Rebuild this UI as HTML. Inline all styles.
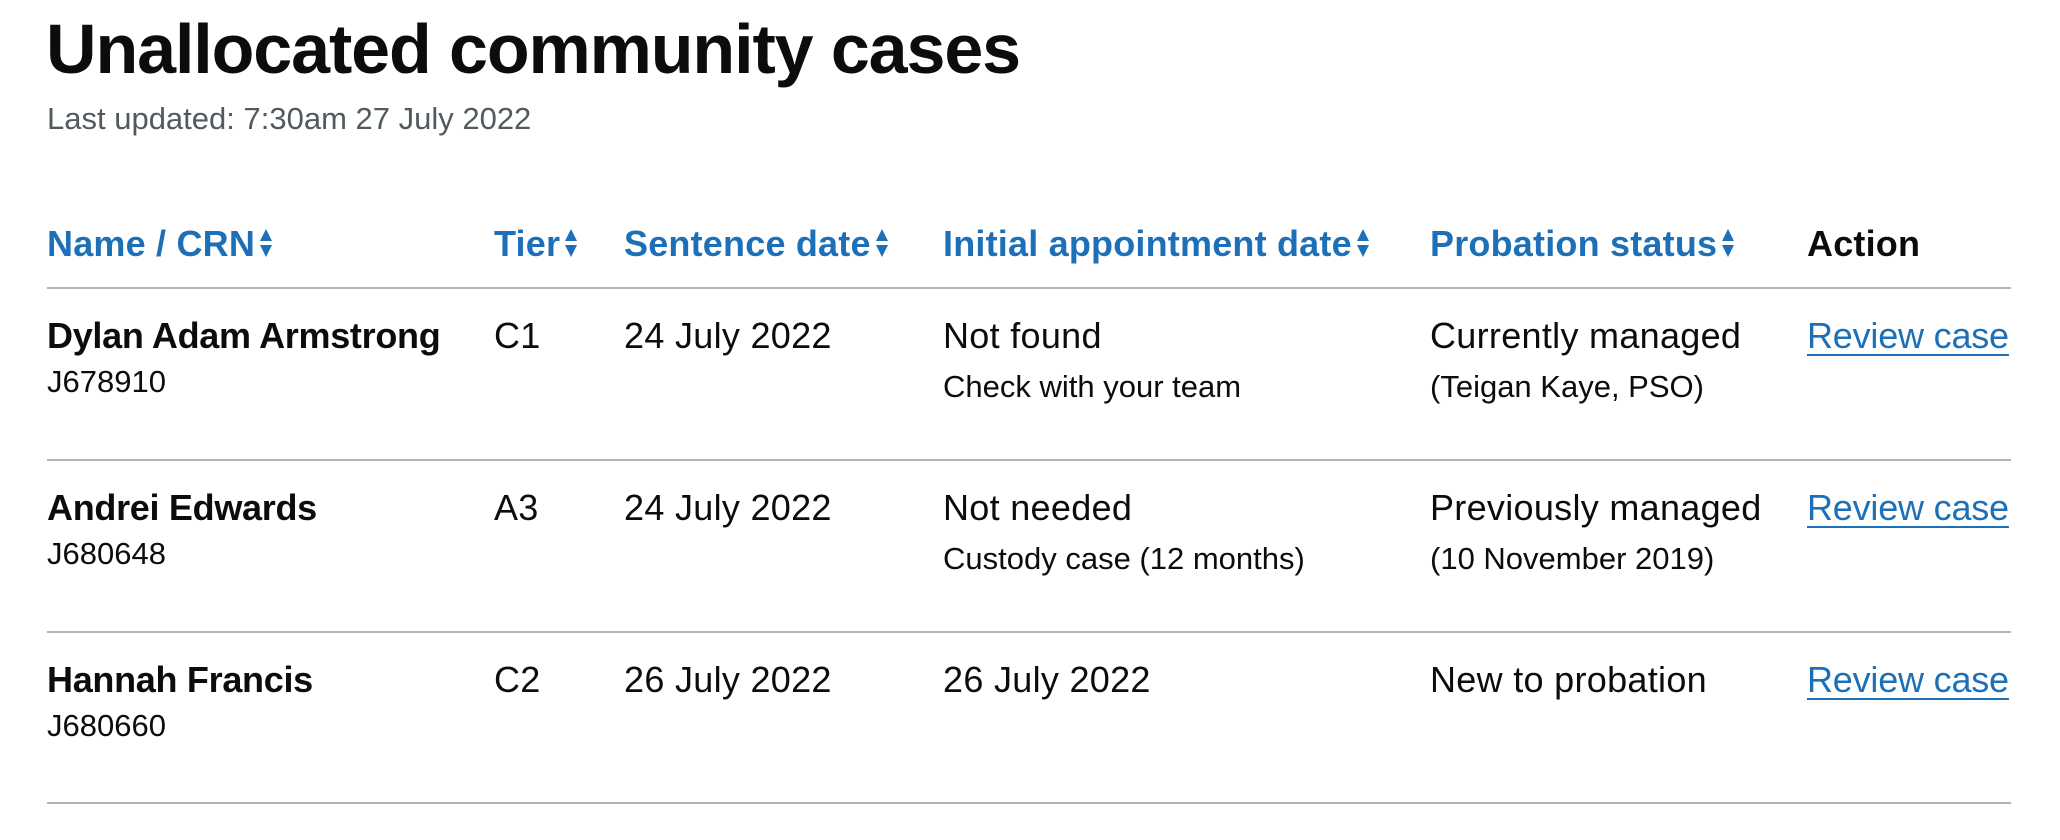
<!DOCTYPE html>
<html><head><meta charset="utf-8"><style>
body{margin:0;width:2060px;height:840px;background:#fff;font-family:"Liberation Sans",Arial,sans-serif;color:#0b0c0c;position:relative;overflow:hidden}
.a{position:absolute;white-space:nowrap;line-height:normal}
h1{position:absolute;left:46px;top:9px;margin:0;font-size:70px;font-weight:bold;letter-spacing:-1.1px;line-height:normal}
.h{font-size:36px;font-weight:bold;color:#1d70b8;top:223px;letter-spacing:0.2px}
.h svg{display:inline-block;vertical-align:-2px;margin-left:4px}
.m{font-size:36px;letter-spacing:0.3px}
.b{font-weight:bold;letter-spacing:-0.3px}
.s{font-size:31px}
.l{color:#1d70b8;text-decoration:underline;text-decoration-thickness:2px;text-underline-offset:6px;letter-spacing:-0.2px}
.line{position:absolute;left:47px;width:1964px;height:2px;background:#b1b4b6}
</style></head><body>
<h1>Unallocated community cases</h1>
<div class="a" style="left:47px;top:101px;font-size:31px;color:#505a5f">Last updated: 7:30am 27 July 2022</div>

<div class="a h" style="left:47px">Name / CRN<svg width="14" height="30" viewBox="0 0 14 30"><path d="M7 1L13 13H1Z M7 29L13 17H1Z" fill="#1d70b8"/></svg></div>
<div class="a h" style="left:494px">Tier<svg width="14" height="30" viewBox="0 0 14 30"><path d="M7 1L13 13H1Z M7 29L13 17H1Z" fill="#1d70b8"/></svg></div>
<div class="a h" style="left:624px">Sentence date<svg width="14" height="30" viewBox="0 0 14 30"><path d="M7 1L13 13H1Z M7 29L13 17H1Z" fill="#1d70b8"/></svg></div>
<div class="a h" style="left:943px">Initial appointment date<svg width="14" height="30" viewBox="0 0 14 30"><path d="M7 1L13 13H1Z M7 29L13 17H1Z" fill="#1d70b8"/></svg></div>
<div class="a h" style="left:1430px">Probation status<svg width="14" height="30" viewBox="0 0 14 30"><path d="M7 1L13 13H1Z M7 29L13 17H1Z" fill="#1d70b8"/></svg></div>
<div class="a h" style="left:1807px;color:#0b0c0c">Action</div>
<div class="line" style="top:287px"></div>

<div class="a m b" style="left:47px;top:315px">Dylan Adam Armstrong</div>
<div class="a s" style="left:47px;top:364px">J678910</div>
<div class="a m" style="left:494px;top:315px">C1</div>
<div class="a m" style="left:624px;top:315px">24 July 2022</div>
<div class="a m" style="left:943px;top:315px">Not found</div>
<div class="a s" style="left:943px;top:369px">Check with your team</div>
<div class="a m" style="left:1430px;top:315px">Currently managed</div>
<div class="a s" style="left:1430px;top:369px">(Teigan Kaye, PSO)</div>
<div class="a m l" style="left:1807px;top:315px">Review case</div>
<div class="line" style="top:459px"></div>

<div class="a m b" style="left:47px;top:487px">Andrei Edwards</div>
<div class="a s" style="left:47px;top:536px">J680648</div>
<div class="a m" style="left:494px;top:487px">A3</div>
<div class="a m" style="left:624px;top:487px">24 July 2022</div>
<div class="a m" style="left:943px;top:487px">Not needed</div>
<div class="a s" style="left:943px;top:541px">Custody case (12 months)</div>
<div class="a m" style="left:1430px;top:487px">Previously managed</div>
<div class="a s" style="left:1430px;top:541px">(10 November 2019)</div>
<div class="a m l" style="left:1807px;top:487px">Review case</div>
<div class="line" style="top:631px"></div>

<div class="a m b" style="left:47px;top:659px">Hannah Francis</div>
<div class="a s" style="left:47px;top:708px">J680660</div>
<div class="a m" style="left:494px;top:659px">C2</div>
<div class="a m" style="left:624px;top:659px">26 July 2022</div>
<div class="a m" style="left:943px;top:659px">26 July 2022</div>
<div class="a m" style="left:1430px;top:659px">New to probation</div>
<div class="a m l" style="left:1807px;top:659px">Review case</div>
<div class="line" style="top:802px"></div>
</body></html>
